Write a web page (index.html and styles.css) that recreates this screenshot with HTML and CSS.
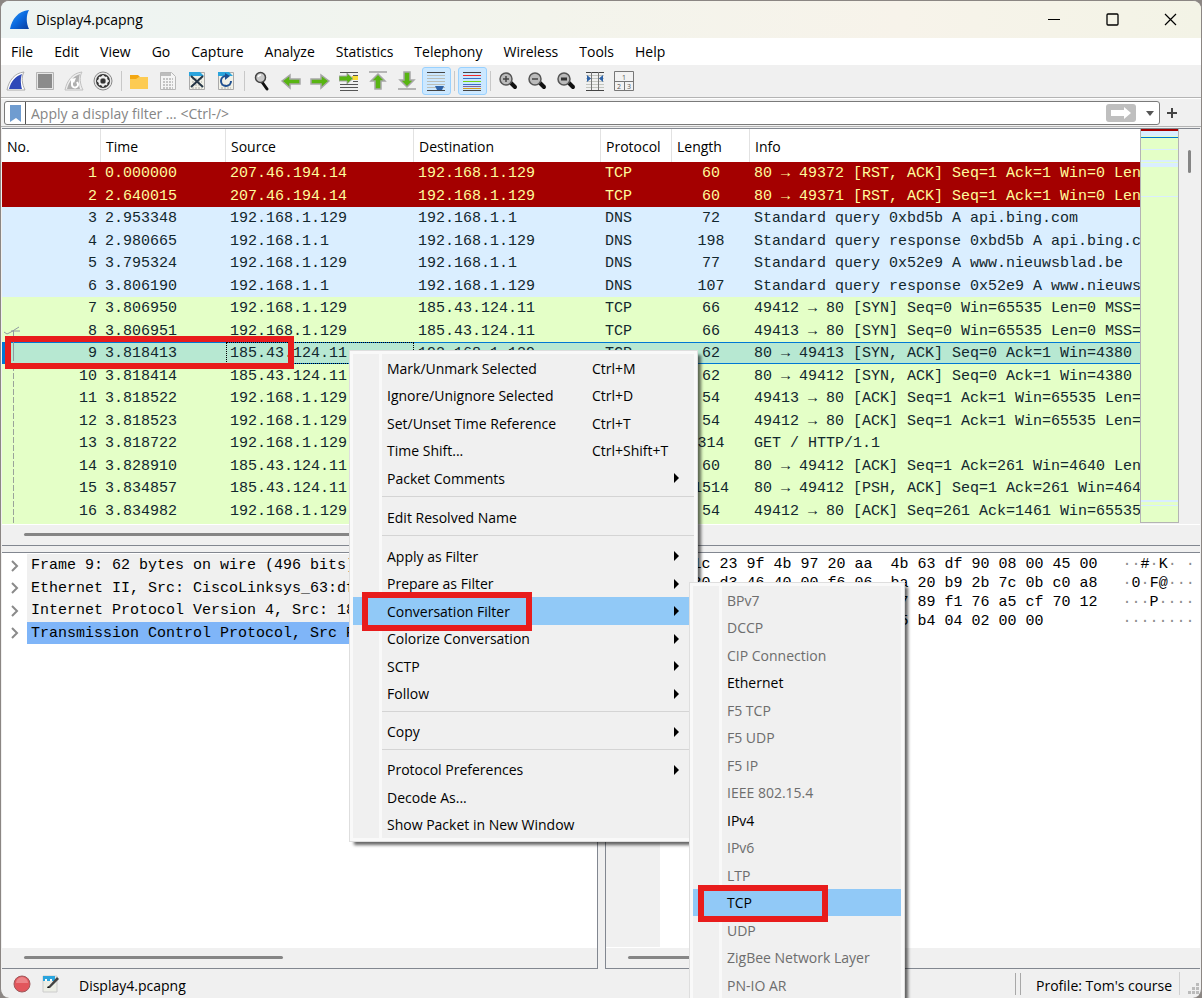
FILE: index.html
```html
<!DOCTYPE html>
<html lang="en">

<head>
    <meta charset="UTF-8">
    <meta name="viewport" content="width=device-width, initial-scale=1.0">
    <title>Display4.pcapng</title>
    <link rel="stylesheet" href="styles.css">
</head>

<body>

    <div class="window">
        <header class="titlebar">
            <svg class="logo" width="20" height="20" viewBox="0 0 20 20">
                <defs>
                    <linearGradient id="fin" x1="0" y1="0" x2="1" y2="1">
                        <stop offset="0" stop-color="#3aa0f0" />
                        <stop offset="0.5" stop-color="#0a6ae0" />
                        <stop offset="1" stop-color="#0b3c9c" />
                    </linearGradient>
                </defs>
                <path d="M0 19C2 9 8 1 19 0c-3 5-3 13 0 19z" fill="url(#fin)" />
            </svg>
            <span class="title">Display4.pcapng</span>
            <button class="winbtn" aria-label="Minimize"><svg width="13" height="13"><path d="M0 6.500h12" stroke="#000" /></svg></button>
            <button class="winbtn" aria-label="Maximize"><svg width="13" height="13"><rect x="1" y="1" width="11" height="11" rx="1" fill="none" stroke="#000" stroke-width="1.300" /></svg></button>
            <button class="winbtn" aria-label="Close"><svg width="13" height="13"><path d="M1 1l11 11M12 1L1 12" stroke="#000" stroke-width="1.200" /></svg></button>
        </header>

        <nav class="menubar">
            <button>File</button>
            <button>Edit</button>
            <button>View</button>
            <button>Go</button>
            <button>Capture</button>
            <button>Analyze</button>
            <button>Statistics</button>
            <button>Telephony</button>
            <button>Wireless</button>
            <button>Tools</button>
            <button>Help</button>
        </nav>

        <div class="toolbar">
            <button aria-label="Start capture"><svg viewBox="0 0 20 20"><path d="M1 19C3 9 9 2 18 1c-3 5-2 12 1 18z" fill="#fff" stroke="#aaa" /><path d="M3 18C5 10 10 5 16 3c-2 5-1 11 0 15z" fill="#2f49b8" /></svg></button>
            <button aria-label="Stop capture"><svg viewBox="0 0 20 20"><path d="M1.500 1.500h17v17h-17z" fill="#e6e6e6" stroke="#b5b5b5" /><path d="M3 3h14v14H3z" fill="#8b8b8b" /></svg></button>
            <button aria-label="Restart capture"><svg viewBox="0 0 20 20"><path d="M1 19C3 9 9 2 18 1c-3 5-2 12 1 18z" fill="#eee" stroke="#c0c0c0" /><path d="M3 18C5 10 10 5 16 3c-2 5-1 11 0 15z" fill="#b0b0b0" /><path d="M8 9v5a3 3 0 1 0 6-1l-1-2" fill="none" stroke="#fff" stroke-width="2" /><path d="M6 8l6-1-2 5z" fill="#fff" /></svg></button>
            <button aria-label="Capture options"><svg viewBox="0 0 20 20"><circle cx="10" cy="10" r="9" fill="#e8e8e8" stroke="#888" /><circle cx="10" cy="10" r="7" fill="#333" /><circle cx="10" cy="10" r="4" fill="none" stroke="#eee" stroke-width="2" /><path d="M10 4v12M4 10h12M6 6l8 8M14 6l-8 8" stroke="#eee" stroke-width="1.500" /><circle cx="10" cy="10" r="2.500" fill="#333" /></svg></button>
            <span class="sep"></span>
            <button aria-label="Open"><svg viewBox="0 0 20 20"><path d="M1 4h8l2 2h8v12H1z" fill="#f3a712" /><path d="M1 8h6l3-2h9v12H1z" fill="#fdcb52" /></svg></button>
            <button aria-label="Save"><svg viewBox="0 0 20 20"><path d="M2.500 1.500h11l4 4v13h-15z" fill="#f5f5f5" stroke="#b8b8b8" /><path d="M3 2h10v3H3z" fill="#bdbdbd" /><path d="M5 8h10M5 11h10M5 14h10M5 17h10" stroke="#c4c4c4" stroke-width="2" stroke-dasharray="2 1" /></svg></button>
            <button aria-label="Close file"><svg viewBox="0 0 20 20"><path d="M2.500 1.500h15v17h-15z" fill="#f1f1e8" stroke="#aaa" /><path d="M2 1h11l4 4H2z" fill="#2aa4dd" /><path d="M5 8h10M5 11h10M5 14h10M5 17h10" stroke="#d0d0c8" stroke-width="2" stroke-dasharray="2 1" /><path d="M4 5l12 11M16 5L4 16" stroke="#263746" stroke-width="2" /></svg></button>
            <button aria-label="Reload file"><svg viewBox="0 0 20 20"><path d="M2.500 1.500h15v17h-15z" fill="#f1f1e8" stroke="#aaa" /><path d="M2 1h11l4 4H2z" fill="#2aa4dd" /><path d="M5 14h10M5 17h10" stroke="#d0d0c8" stroke-width="2" stroke-dasharray="2 1" /><path d="M15 10a5 5 0 1 1-5-5" fill="none" stroke="#1d4f91" stroke-width="2" /><path d="M9 2l5 3-5 4z" fill="#1d4f91" /></svg></button>
            <span class="sep"></span>
            <button aria-label="Find"><svg viewBox="0 0 20 20"><path d="M10 11l5 7" stroke="#111" stroke-width="3" stroke-linecap="round" /><circle cx="8.500" cy="6.500" r="5" fill="#c9c9c9" stroke="#444" stroke-width="1.500" /><path d="M6 6a3 3 0 0 1 3-2" stroke="#fff" stroke-width="1.500" fill="none" /></svg></button>
            <button aria-label="Previous"><svg viewBox="0 0 20 20"><path d="M1 10l8-6v4h10v5H9v4z" fill="#58b512" stroke="#a6a6a6" stroke-width="1.500" /></svg></button>
            <button aria-label="Next"><svg viewBox="0 0 20 20"><path d="M19 10l-8-6v4H1v5h10v4z" fill="#58b512" stroke="#a6a6a6" stroke-width="1.500" /></svg></button>
            <button aria-label="Go to packet"><svg viewBox="0 0 20 20"><path d="M1 1.500h18M1 13.500h18M1 16.500h18M1 19.500h18M14 4.500h5M14 10.500h5" stroke="#555" /><path d="M13 5h6v4h-6z" fill="#f7dc35" /><path d="M14 7.500L8 2v3H0v5h8v3z" fill="#58b512" stroke="#a2a2a2" /></svg></button>
            <button aria-label="First packet"><svg viewBox="0 0 20 20"><path d="M1 1h18" stroke="#b5b5b5" stroke-width="2" /><path d="M10 3l7 7h-4v8H7v-8H3z" fill="#58b512" stroke="#a6a6a6" stroke-width="1.500" /></svg></button>
            <button aria-label="Last packet"><svg viewBox="0 0 20 20"><path d="M1 18h18" stroke="#b5b5b5" stroke-width="2" /><path d="M10 16L3 9h4V1h6v8h4z" fill="#58b512" stroke="#a6a6a6" stroke-width="1.500" /></svg></button>
            <button class="on" aria-label="Auto scroll"><svg viewBox="0 0 20 20"><path d="M1 1.500h18M1 19.500h18" stroke="#444" /><path d="M1 4.500h18M1 7.500h18M1 10.500h18M1 13.500h18M1 16.500h18" stroke="#babdb6" /><path d="M9 15h9l-2 4h-5z" fill="#2e63a8" /></svg></button>
            <span class="sep"></span>
            <button class="on" aria-label="Colorize"><svg viewBox="0 0 20 20"><path d="M1 1.500h18M1 19.500h18" stroke="#444" /><path d="M1 4.500h18" stroke="#ef2929" /><path d="M1 7.500h18" stroke="#3b6fc4" /><path d="M1 10.500h18" stroke="#73d216" /><path d="M1 13.500h18" stroke="#3b6fc4" /><path d="M1 15.500h18" stroke="#86609c" /><path d="M1 17.500h18" stroke="#d39a1d" /></svg></button>
            <span class="sep"></span>
            <button aria-label="Zoom in"><svg viewBox="0 0 20 20"><path d="M13 12l4 4" stroke="#111" stroke-width="4" stroke-linecap="round" /><circle cx="8" cy="8" r="6" fill="#bbb" stroke="#555" stroke-width="1.500" /><path d="M5 8h6M8 5v6" stroke="#444" stroke-width="1.500" /></svg></button>
            <button aria-label="Zoom out"><svg viewBox="0 0 20 20"><path d="M13 12l4 4" stroke="#111" stroke-width="4" stroke-linecap="round" /><circle cx="8" cy="8" r="6" fill="#bbb" stroke="#555" stroke-width="1.500" /><path d="M5 8h6" stroke="#444" stroke-width="1.500" /></svg></button>
            <button aria-label="Normal size"><svg viewBox="0 0 20 20"><path d="M13 12l4 4" stroke="#111" stroke-width="4" stroke-linecap="round" /><circle cx="8" cy="8" r="6" fill="#bbb" stroke="#555" stroke-width="1.500" /><path d="M5 8h6" stroke="#333" stroke-width="3" /></svg></button>
            <button aria-label="Resize columns"><svg viewBox="0 0 20 20"><path d="M1 1.500h18M1 19.500h18" stroke="#444" /><path d="M1 4.500h18M1 7.500h18M1 10.500h18M1 13.500h18M1 16.500h18" stroke="#c2c5be" /><path d="M6.500 1v18M13.500 1v18" stroke="#777" /><path d="M2 4l4 3.500L2 11zM18 4l-4 3.500 4 3.500z" fill="#2e63a8" /></svg></button>
            <button aria-label="Layout"><svg viewBox="0 0 20 20"><path d="M.500.500h19v19H.500zM.500 10.500h19M10.500 10.500v9" fill="#f2f2f2" stroke="#777" /><text x="8" y="9" font-size="7" fill="#555">1</text><text x="3" y="18" font-size="7" fill="#555">2</text><text x="13" y="18" font-size="7" fill="#555">3</text></svg></button>
        </div>

        <div class="filterbar">
            <div class="filterbox">
                <button class="bookmark" aria-label="Bookmarks"><svg width="11" height="17" viewBox="0 0 11 17"><path d="M0 0h11v17l-5-4-6 4z" fill="#6f9cd0" /></svg></button>
                <input type="text" aria-label="Display filter" placeholder="Apply a display filter … &lt;Ctrl-/&gt;">
                <button class="apply" aria-label="Apply"><svg width="20" height="12" viewBox="0 0 20 12"><path d="M0 3h13V0l7 6-7 6V9H0z" fill="#fff" /></svg></button>
                <button class="drop" aria-label="Recent filters"><svg width="8" height="5" viewBox="0 0 8 5"><path d="M0 0h8L4 5z" fill="#555" /></svg></button>
            </div>
            <button class="add" aria-label="Add filter"><svg width="10" height="10" viewBox="0 0 10 10"><path d="M5 0v10M0 5h10" stroke="#444" stroke-width="2" /></svg></button>
        </div>

        <section class="packets">
            <div class="packetrow">
                <div class="tablewrap">
                    <table>
                        <colgroup>
                            <col class="c-no"><col class="c-time"><col class="c-src"><col class="c-dst"><col class="c-proto"><col class="c-len"><col>
                        </colgroup>
                        <thead>
                            <tr><th>No.</th><th>Time</th><th>Source</th><th>Destination</th><th>Protocol</th><th>Length</th><th>Info</th></tr>
                        </thead>
                        <tbody>
                            <tr class="rst"><td>1</td><td>0.000000</td><td>207.46.194.14</td><td>192.168.1.129</td><td>TCP</td><td>60</td><td>80 → 49372 [RST, ACK] Seq=1 Ack=1 Win=0 Len=0</td></tr>
                            <tr class="rst"><td>2</td><td>2.640015</td><td>207.46.194.14</td><td>192.168.1.129</td><td>TCP</td><td>60</td><td>80 → 49371 [RST, ACK] Seq=1 Ack=1 Win=0 Len=0</td></tr>
                            <tr class="dns"><td>3</td><td>2.953348</td><td>192.168.1.129</td><td>192.168.1.1</td><td>DNS</td><td>72</td><td>Standard query 0xbd5b A api.bing.com</td></tr>
                            <tr class="dns"><td>4</td><td>2.980665</td><td>192.168.1.1</td><td>192.168.1.129</td><td>DNS</td><td>198</td><td>Standard query response 0xbd5b A api.bing.com</td></tr>
                            <tr class="dns"><td>5</td><td>3.795324</td><td>192.168.1.129</td><td>192.168.1.1</td><td>DNS</td><td>77</td><td>Standard query 0x52e9 A www.nieuwsblad.be</td></tr>
                            <tr class="dns"><td>6</td><td>3.806190</td><td>192.168.1.1</td><td>192.168.1.129</td><td>DNS</td><td>107</td><td>Standard query response 0x52e9 A www.nieuwsblad.be</td></tr>
                            <tr><td>7</td><td>3.806950</td><td>192.168.1.129</td><td>185.43.124.11</td><td>TCP</td><td>66</td><td>49412 → 80 [SYN] Seq=0 Win=65535 Len=0 MSS=1460</td></tr>
                            <tr><td>8</td><td>3.806951</td><td>192.168.1.129</td><td>185.43.124.11</td><td>TCP</td><td>66</td><td>49413 → 80 [SYN] Seq=0 Win=65535 Len=0 MSS=1460</td></tr>
                            <tr class="selected"><td>9</td><td>3.818413</td><td>185.43.124.11</td><td>192.168.1.129</td><td>TCP</td><td>62</td><td>80 → 49413 [SYN, ACK] Seq=0 Ack=1 Win=4380 Len=0</td></tr>
                            <tr><td>10</td><td>3.818414</td><td>185.43.124.11</td><td>192.168.1.129</td><td>TCP</td><td>62</td><td>80 → 49412 [SYN, ACK] Seq=0 Ack=1 Win=4380 Len=0</td></tr>
                            <tr><td>11</td><td>3.818522</td><td>192.168.1.129</td><td>185.43.124.11</td><td>TCP</td><td>54</td><td>49413 → 80 [ACK] Seq=1 Ack=1 Win=65535 Len=0</td></tr>
                            <tr><td>12</td><td>3.818523</td><td>192.168.1.129</td><td>185.43.124.11</td><td>TCP</td><td>54</td><td>49412 → 80 [ACK] Seq=1 Ack=1 Win=65535 Len=0</td></tr>
                            <tr><td>13</td><td>3.818722</td><td>192.168.1.129</td><td>185.43.124.11</td><td>HTTP</td><td>314</td><td>GET / HTTP/1.1</td></tr>
                            <tr><td>14</td><td>3.828910</td><td>185.43.124.11</td><td>192.168.1.129</td><td>TCP</td><td>60</td><td>80 → 49412 [ACK] Seq=1 Ack=261 Win=4640 Len=0</td></tr>
                            <tr><td>15</td><td>3.834857</td><td>185.43.124.11</td><td>192.168.1.129</td><td>TCP</td><td>1514</td><td>80 → 49412 [PSH, ACK] Seq=1 Ack=261 Win=4640</td></tr>
                            <tr><td>16</td><td>3.834982</td><td>192.168.1.129</td><td>185.43.124.11</td><td>TCP</td><td>54</td><td>49412 → 80 [ACK] Seq=261 Ack=1461 Win=65535</td></tr>
                        </tbody>
                    </table>
                    <!-- related packet marker -->
                    <svg class="related" width="20" height="200" viewBox="0 0 20 200"><path d="M1 7l3 2 4-2 8-5M8 6h9" fill="none" stroke="#8f9aa0" /><path d="M10.500 6v30" stroke="#8f9aa0" /><path d="M10.500 40v160" stroke="#9aa39a" stroke-dasharray="6 2" /></svg>
                </div>
                <div class="minimap"></div>
                <div class="vscroll"><span></span></div>
            </div>
            <div class="hscroll"><span></span></div>
        </section>

        <section class="lower">
            <div class="details">
                <ul>
                    <li><svg viewBox="0 0 8 12"><path d="M1 1l5 5-5 5" /></svg><span>Frame 9: 62 bytes on wire (496 bits), 62 bytes captured</span></li>
                    <li><svg viewBox="0 0 8 12"><path d="M1 1l5 5-5 5" /></svg><span>Ethernet II, Src: CiscoLinksys_63:df:90, Dst: Dell</span></li>
                    <li><svg viewBox="0 0 8 12"><path d="M1 1l5 5-5 5" /></svg><span>Internet Protocol Version 4, Src: 185.43.124.11</span></li>
                    <li class="current"><svg viewBox="0 0 8 12"><path d="M1 1l5 5-5 5" /></svg><span>Transmission Control Protocol, Src Port: 80</span></li>
                </ul>
                <div class="hscroll"><span></span></div>
            </div>
            <div class="bytes">
                <div class="dump">
                    <pre class="offset">0000
0010
0020
0030</pre>
                    <pre class="hex">00 1c 23 9f 4b 97 20 aa  4b 63 df 90 08 00 45 00
00 30 d3 46 40 00 f6 06  ba 20 b9 2b 7c 0b c0 a8
01 81 00 50 c1 05 f2 1b  47 89 f1 76 a5 cf 70 12
11 1c 9a 3e 00 00 02 04  05 b4 04 02 00 00</pre>
                    <pre class="ascii">··<b>#</b>·<b>K</b>· ·
·<b>0</b>·<b>F@</b>···
···<b>P</b>····
········</pre>
                </div>
                <div class="hscroll"><span></span></div>
            </div>
        </section>

        <footer class="statusbar">
            <svg width="18" height="18" viewBox="0 0 18 18"><circle cx="9" cy="9" r="8" fill="#e2565c" stroke="#9c5a5c" /><path d="M3 8a6 6 0 0 1 12 0z" fill="#ec8488" /></svg>
            <svg width="18" height="18" viewBox="0 0 18 18"><path d="M1 1h14v16H1z" fill="#eceee6" stroke="#ccc" /><path d="M1 1h12v5H1z" fill="#2aa4dd" /><path d="M3 4h2v2H3zM8 4h2v2H8z" fill="#fff" /><path d="M6 12l9-10 2 2-9 9z" fill="#444" /><path d="M5 13l1-2 2 2z" fill="#111" /></svg>
            <span class="file">Display4.pcapng</span>
            <span class="split"></span>
            <span class="profile">Profile: Tom's course</span>
            <svg class="grip" width="14" height="14" viewBox="0 0 14 14"><path d="M10 1h3v3h-3zM6 5h3v3H6zM10 5h3v3h-3zM2 9h3v3H2zM6 9h3v3H6zM10 9h3v3h-3z" fill="#bbb" /></svg>
        </footer>

        <div class="menu packet-menu">
            <button><span>Mark/Unmark Selected</span><kbd>Ctrl+M</kbd></button>
            <button><span>Ignore/Unignore Selected</span><kbd>Ctrl+D</kbd></button>
            <button><span>Set/Unset Time Reference</span><kbd>Ctrl+T</kbd></button>
            <button><span>Time Shift...</span><kbd>Ctrl+Shift+T</kbd></button>
            <button class="more"><span>Packet Comments</span></button>
            <hr>
            <button><span>Edit Resolved Name</span></button>
            <hr>
            <button class="more"><span>Apply as Filter</span></button>
            <button class="more"><span>Prepare as Filter</span></button>
            <button class="more active"><span>Conversation Filter</span></button>
            <button class="more"><span>Colorize Conversation</span></button>
            <button class="more"><span>SCTP</span></button>
            <button class="more"><span>Follow</span></button>
            <hr>
            <button class="more"><span>Copy</span></button>
            <hr>
            <button class="more"><span>Protocol Preferences</span></button>
            <button><span>Decode As...</span></button>
            <button><span>Show Packet in New Window</span></button>
        </div>

        <div class="menu conversation-menu">
            <button disabled><span>BPv7</span></button>
            <button disabled><span>DCCP</span></button>
            <button disabled><span>CIP Connection</span></button>
            <button><span>Ethernet</span></button>
            <button disabled><span>F5 TCP</span></button>
            <button disabled><span>F5 UDP</span></button>
            <button disabled><span>F5 IP</span></button>
            <button disabled><span>IEEE 802.15.4</span></button>
            <button><span>IPv4</span></button>
            <button disabled><span>IPv6</span></button>
            <button disabled><span>LTP</span></button>
            <button class="active"><span>TCP</span></button>
            <button disabled><span>UDP</span></button>
            <button disabled><span>ZigBee Network Layer</span></button>
            <button disabled><span>PN-IO AR</span></button>
        </div>

        <div class="mark mark-packet"></div>
        <div class="mark mark-filter"></div>
        <div class="mark mark-tcp"></div>
    </div>

</body>

</html>
```

FILE: styles.css
```css
* {
    box-sizing: border-box;
}

body {
    margin: 0;
    height: 100vh;
    overflow: hidden;
    background: #8b8683;
    font-family: "Open Sans", "Noto Sans", sans-serif;
    font-size: 14px;
    color: #000;
}

button {
    font: inherit;
    color: inherit;
    background: none;
    border: none;
    padding: 0;
    display: flex;
    align-items: center;
    justify-content: center;
}

.window {
    position: relative;
    height: 100%;
    display: flex;
    flex-direction: column;
    background: #f0f0f0;
    border: 1px solid #8b8683;
    border-bottom: none;
    border-radius: 9px;
    overflow: hidden;
}

/* title bar */
.titlebar {
    display: flex;
    align-items: center;
    height: 37px;
    flex: none;
    padding: 0 2px 0 9px;
    background: linear-gradient(to right, #edf4f3, #f3f4ec 45%, #f7f3ea 75%, #f3f3e6);
}

.title {
    flex: 1;
    padding-left: 6px;
}

.winbtn {
    width: 58px;
    height: 37px;
}

/* menu bar */
.menubar {
    display: flex;
    gap: 1px;
    height: 27px;
    flex: none;
    background: #fff;
}

.menubar button {
    padding: 0 10px;
}

/* toolbar */
.toolbar {
    display: flex;
    align-items: center;
    height: 33px;
    flex: none;
    padding: 1px;
    border-bottom: 1px solid #b4b4b4;
}

.toolbar button {
    justify-content: flex-start;
    width: 29px;
    height: 28px;
    padding-left: 3px;
    border: 1px solid transparent;
    border-radius: 3px;
}

.toolbar button.on {
    background: #cce8ff;
    border-color: #99d1ff;
}

.toolbar svg {
    flex: none;
    width: 20px;
    height: 20px;
}

.sep {
    width: 7px;
    height: 20px;
    background: linear-gradient(#c8c8c8, #c8c8c8) 3px 0 / 1px 100% no-repeat;
}

/* filter bar */
.filterbar {
    display: flex;
    align-items: center;
    height: 29px;
    flex: none;
    padding: 1px 3px 0;
    border-top: 1px solid #fff;
    border-bottom: 1px solid #b4b4b4;
}

.filterbox {
    flex: 1;
    display: flex;
    align-items: center;
    height: 24px;
    background: #fff;
    border: 1px solid #7a7a7a;
    border-radius: 3px;
}

.bookmark {
    width: 21px;
    height: 22px;
    border-right: 1px solid #555;
}

.filterbox input {
    flex: 1;
    height: 22px;
    padding: 0 5px;
    border: none;
    outline: none;
    background: none;
    font: inherit;
}

.filterbox input::placeholder {
    color: #858585;
}

.apply {
    width: 30px;
    height: 18px;
    background: #bfbfbf;
    border-radius: 3px;
}

.drop {
    width: 23px;
    height: 22px;
    padding-left: 4px;
}

.add {
    width: 24px;
    margin-right: 14px;
}

/* packet list */
.packets {
    flex: none;
    margin: 1px 1px 0;
    border: 1px solid #828790;
    border-width: 1px 0;
}

.packetrow {
    display: flex;
}

.tablewrap {
    position: relative;
    flex: 1;
    min-width: 0;
    overflow: hidden;
    background: #e4ffc7;
    padding-bottom: 2px;
}

table {
    width: 100%;
    table-layout: fixed;
    border-collapse: separate;
    border-spacing: 0;
    color: #12272e;
}

.c-no {
    width: 99px;
}

.c-time {
    width: 125px;
}

.c-src {
    width: 188px;
}

.c-dst {
    width: 187px;
}

.c-proto {
    width: 71px;
}

.c-len {
    width: 78px;
}

th {
    height: 33px;
    padding: 1px 0 0 5px;
    background: #fff;
    color: #000;
    border-right: 1px solid #e2e2e2;
    font-weight: normal;
    text-align: left;
    white-space: nowrap;
}

th:last-child {
    border-right: none;
}

td {
    height: 22px;
    padding: 1px 0 0 4px;
    font-family: "Liberation Mono", monospace;
    font-size: 15px;
    line-height: 21px;
    white-space: nowrap;
    overflow: hidden;
}

tbody tr:nth-child(even) td {
    height: 23px;
}

td:first-child {
    text-align: right;
    padding-right: 4px;
}

td:nth-child(6) {
    text-align: center;
    padding-left: 0;
}

.rst {
    background: #a40000;
    color: #fffc9c;
}

.dns {
    background: #daeeff;
}

.selected {
    background: #b7e8d2;
}

.selected td {
    border: 1px solid #0078d4;
    border-width: 1px 0;
    line-height: 19px;
}

.selected td:first-child {
    border-left: 3px solid #0078d4;
}

.selected td:nth-child(3) {
    outline: 1px dotted #000;
    outline-offset: -1px;
}

.related {
    position: absolute;
    left: 1px;
    top: 196px;
}

.minimap {
    width: 39px;
    margin-bottom: 1px;
    border: 1px solid #b4b4b4;
    border-top: none;
    background:
        linear-gradient(#a40000, #a40000) 0 0 / 100% 2px no-repeat,
        linear-gradient(#daeeff, #daeeff) 0 2px / 100% 5px no-repeat,
        linear-gradient(#0078d4, #0078d4) 0 8px / 100% 1px no-repeat,
        linear-gradient(#daeeff, #daeeff) 0 20px / 100% 1px no-repeat,
        linear-gradient(#daeeff, #daeeff) 0 31px / 100% 2px no-repeat,
        linear-gradient(#daeeff, #daeeff) 0 34px / 100% 4px no-repeat,
        linear-gradient(#daeeff, #daeeff) 0 67px / 100% 1px no-repeat,
        linear-gradient(#daeeff, #daeeff) 0 371px / 100% 2px no-repeat,
        linear-gradient(#daeeff, #daeeff) 0 376px / 100% 1px no-repeat,
        #e4ffc7;
}

.vscroll {
    width: 21px;
    padding: 21px 9px;
}

.vscroll span {
    display: block;
    width: 3px;
    height: 23px;
    border-radius: 2px;
    background: #858585;
}

.hscroll {
    height: 21px;
    flex: none;
    padding: 8px 22px;
    border-top: 1px solid #fff;
    background: #f0f0f0;
}

.hscroll span {
    display: block;
    width: 47%;
    height: 3px;
    border-radius: 2px;
    background: #858585;
}

/* lower panes */
.lower {
    flex: 1;
    min-height: 0;
    display: flex;
    gap: 7px;
    margin: 6px 1px 0;
}

.details,
.bytes {
    flex: 1;
    min-width: 0;
    display: flex;
    flex-direction: column;
    background: #fff;
    border: 1px solid #828790;
    border-left: none;
}

.bytes {
    border-left: 1px solid #828790;
    border-right: none;
}

.details ul {
    flex: 1;
    margin: 0;
    padding: 1px 0 0;
    list-style: none;
}

.details li {
    display: flex;
    align-items: center;
    height: 23px;
    padding-left: 9px;
    gap: 8px;
    font-family: "Liberation Mono", monospace;
    font-size: 15px;
}

.details li:nth-child(even) {
    height: 22px;
}

.details li svg {
    flex: none;
    width: 8px;
    height: 12px;
    fill: none;
    stroke: #8a8a8a;
    stroke-width: 2;
}

.details li span {
    flex: 1;
    min-width: 0;
    height: 100%;
    padding-left: 4px;
    line-height: 24px;
    background: #f0f0f0;
    white-space: nowrap;
    overflow: hidden;
}

.details li.current span {
    background: #7fb5f8;
}

.dump {
    flex: 1;
    display: flex;
}

.dump pre {
    margin: 0;
    padding-top: 2px;
    font-family: "Liberation Mono", monospace;
    font-size: 15px;
    line-height: 19px;
}

.dump .offset {
    width: 54px;
    padding-left: 9px;
    background: #f0f0f0;
    color: #777;
}

.dump .hex {
    padding-left: 6px;
}

.dump .ascii {
    padding-left: 25px;
    color: #8c8c8c;
}

.ascii b {
    font-weight: normal;
    color: #000;
}

/* status bar */
.statusbar {
    display: flex;
    align-items: center;
    gap: 11px;
    height: 29px;
    flex: none;
    padding: 0 1px 0 12px;
}

.file {
    flex: 1;
    padding: 4px 0 0 8px;
}

.split {
    width: 6px;
    height: 22px;
    border: 1px solid #a8a8a8;
    border-width: 0 1px;
}

.profile {
    padding: 4px 7px 0 4px;
    border-right: 1px solid #d0d0d0;
}

.statusbar .grip {
    margin: 10px 0 0 -5px;
}

/* popup menus */
.menu {
    position: absolute;
    padding: 3px;
    background: #f0f0f0;
    border: 1px solid #dedede;
    box-shadow: inset 0 0 0 3px #f9f9f9, 4px 4px 3px -1px rgba(0, 0, 0, 0.6);
}

.menu::before {
    content: "";
    position: absolute;
    left: 29px;
    top: 3px;
    bottom: 3px;
    width: 3px;
    background: #f9f9f9;
}

.menu button {
    position: relative;
    display: grid;
    grid-template-columns: 205px 1fr auto;
    justify-content: normal;
    width: 100%;
    height: 28px;
    padding: 0 15px 0 34px;
    text-align: left;
    white-space: nowrap;
}

.menu button:nth-child(even) {
    height: 27px;
}

.menu button:disabled {
    color: #6d6d6d;
}

.menu button.active {
    background: #91c9f7;
}

.menu kbd {
    font: inherit;
}

.more::after {
    content: "";
    grid-column: 3;
    border: 5px solid transparent;
    border-left: 5px solid #000;
    border-right: none;
}

.menu hr {
    height: 11px;
    margin: 0 0 0 29px;
    border: none;
    background: linear-gradient(#d4d4d4, #d4d4d4) 0 4px / 100% 1px no-repeat;
}

.packet-menu {
    left: 348px;
    top: 349px;
    width: 349px;
}

.conversation-menu {
    left: 688px;
    top: 581px;
    width: 216px;
}

/* red highlight frames */
.mark {
    position: absolute;
    border: 6px solid #e81c1c;
    pointer-events: none;
}

.mark-packet {
    left: 4px;
    top: 335px;
    width: 289px;
    height: 33px;
}

.mark-filter {
    left: 361px;
    top: 591px;
    width: 170px;
    height: 39px;
}

.mark-tcp {
    left: 697px;
    top: 884px;
    width: 130px;
    height: 37px;
}
```
